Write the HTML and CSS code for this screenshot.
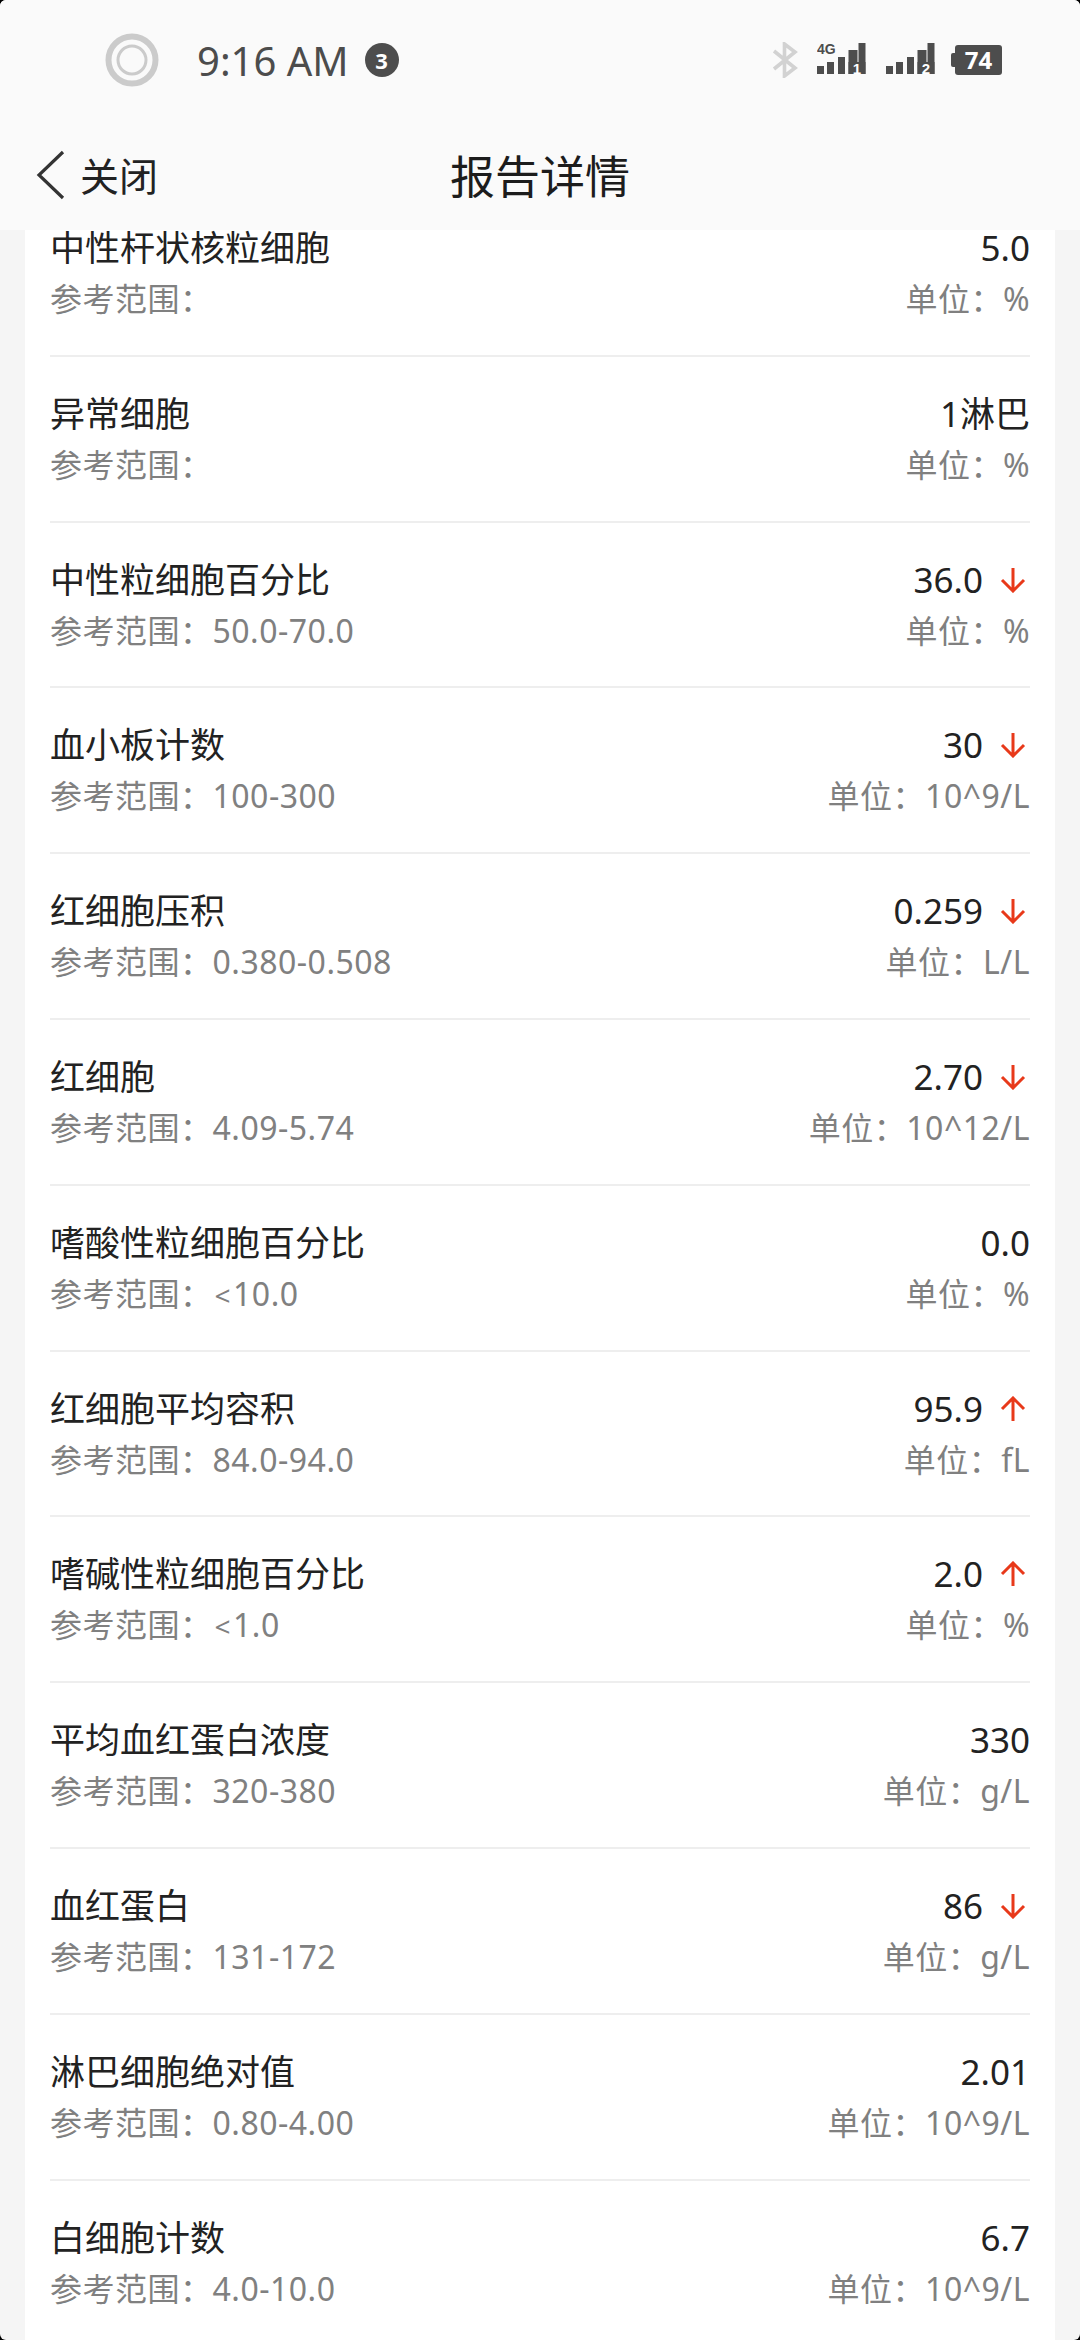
FILE: index.html
```html
<!DOCTYPE html>
<html lang="zh-CN">
<head>
    <meta charset="UTF-8">
    <meta name="viewport" content="width=device-width, initial-scale=1.0">
    <title>报告详情</title>
    <link rel="stylesheet" href="styles.css">
</head>
<body>
    <div class="app">
        <header class="top">
            <!-- Status bar -->
            <div class="status">
                <div class="status-left">
                    <svg class="ring" width="54" height="54" viewBox="0 0 54 54">
                        <circle cx="27" cy="27" r="23.5" fill="none" stroke="#cbcbcb" stroke-width="6"/>
                        <circle cx="27" cy="27" r="14" fill="none" stroke="#cbcbcb" stroke-width="3"/>
                    </svg>
                    <span class="clock">9:16 AM</span>
                    <span class="badge">3</span>
                </div>
                <div class="status-right">
                    <svg class="bt" width="26" height="36" viewBox="0 0 26 36">
                        <path d="M2 9 L23 26 L12.5 34 V2 L23 10 L2 27" fill="none" stroke="#d2d2d2" stroke-width="3.6"/>
                    </svg>
                    <svg class="sig" width="50" height="34" viewBox="0 0 50 34">
                        <text x="0" y="10.5" class="sig-net">4G</text>
                        <rect x="0" y="23" width="7" height="8"/>
                        <rect x="10" y="19" width="7" height="12"/>
                        <rect x="21" y="14" width="7" height="17"/>
                        <rect x="31.5" y="7" width="9" height="24"/>
                        <rect x="41.5" y="0" width="7" height="31"/>
                        <rect x="31.5" y="19" width="17" height="12"/>
                        <text x="40" y="30.5" class="sig-num">1</text>
                    </svg>
                    <svg class="sig" width="50" height="34" viewBox="0 0 50 34">
                        <rect x="0" y="23" width="7" height="8"/>
                        <rect x="10" y="19" width="7" height="12"/>
                        <rect x="21" y="14" width="7" height="17"/>
                        <rect x="31.5" y="7" width="9" height="24"/>
                        <rect x="41.5" y="0" width="7" height="31"/>
                        <rect x="31.5" y="19" width="17" height="12"/>
                        <text x="40" y="30.5" class="sig-num">2</text>
                    </svg>
                    <div class="battery"><span>74</span></div>
                </div>
            </div>
            <!-- Title bar -->
            <nav class="nav">
                <a class="back">
                    <svg width="30" height="50" viewBox="0 0 30 50">
                        <path d="M27 2 L3 25 L27 48" fill="none" stroke="#333" stroke-width="3.2"/>
                    </svg>
                    <span>关闭</span>
                </a>
                <h1>报告详情</h1>
            </nav>
        </header>

        <main class="scroller">
            <div class="card">
                <div class="row">
                    <div class="line"><span class="name">中性杆状核粒细胞</span><span class="value">5.0</span></div>
                    <div class="line sub"><span>参考范围：</span><span>单位：%</span></div>
                </div>
                <div class="row">
                    <div class="line"><span class="name">异常细胞</span><span class="value">1淋巴</span></div>
                    <div class="line sub"><span>参考范围：</span><span>单位：%</span></div>
                </div>
                <div class="row">
                    <div class="line"><span class="name">中性粒细胞百分比</span><span class="value">36.0<svg class="arrow" viewBox="0 0 26 26"><path d="M13 1 V24 M2 13 L13 24 L24 13"/></svg></span></div>
                    <div class="line sub"><span>参考范围：50.0-70.0</span><span>单位：%</span></div>
                </div>
                <div class="row">
                    <div class="line"><span class="name">血小板计数</span><span class="value">30<svg class="arrow" viewBox="0 0 26 26"><path d="M13 1 V24 M2 13 L13 24 L24 13"/></svg></span></div>
                    <div class="line sub"><span>参考范围：100-300</span><span>单位：10^9/L</span></div>
                </div>
                <div class="row">
                    <div class="line"><span class="name">红细胞压积</span><span class="value">0.259<svg class="arrow" viewBox="0 0 26 26"><path d="M13 1 V24 M2 13 L13 24 L24 13"/></svg></span></div>
                    <div class="line sub"><span>参考范围：0.380-0.508</span><span>单位：L/L</span></div>
                </div>
                <div class="row">
                    <div class="line"><span class="name">红细胞</span><span class="value">2.70<svg class="arrow" viewBox="0 0 26 26"><path d="M13 1 V24 M2 13 L13 24 L24 13"/></svg></span></div>
                    <div class="line sub"><span>参考范围：4.09-5.74</span><span>单位：10^12/L</span></div>
                </div>
                <div class="row">
                    <div class="line"><span class="name">嗜酸性粒细胞百分比</span><span class="value">0.0</span></div>
                    <div class="line sub"><span>参考范围：<span class="lt">&lt;</span>10.0</span><span>单位：%</span></div>
                </div>
                <div class="row">
                    <div class="line"><span class="name">红细胞平均容积</span><span class="value">95.9<svg class="arrow" viewBox="0 0 26 26"><path d="M13 25 V2 M2 13 L13 2 L24 13"/></svg></span></div>
                    <div class="line sub"><span>参考范围：84.0-94.0</span><span>单位：fL</span></div>
                </div>
                <div class="row">
                    <div class="line"><span class="name">嗜碱性粒细胞百分比</span><span class="value">2.0<svg class="arrow" viewBox="0 0 26 26"><path d="M13 25 V2 M2 13 L13 2 L24 13"/></svg></span></div>
                    <div class="line sub"><span>参考范围：<span class="lt">&lt;</span>1.0</span><span>单位：%</span></div>
                </div>
                <div class="row">
                    <div class="line"><span class="name">平均血红蛋白浓度</span><span class="value">330</span></div>
                    <div class="line sub"><span>参考范围：320-380</span><span>单位：g/L</span></div>
                </div>
                <div class="row">
                    <div class="line"><span class="name">血红蛋白</span><span class="value">86<svg class="arrow" viewBox="0 0 26 26"><path d="M13 1 V24 M2 13 L13 24 L24 13"/></svg></span></div>
                    <div class="line sub"><span>参考范围：131-172</span><span>单位：g/L</span></div>
                </div>
                <div class="row">
                    <div class="line"><span class="name">淋巴细胞绝对值</span><span class="value">2.01</span></div>
                    <div class="line sub"><span>参考范围：0.80-4.00</span><span>单位：10^9/L</span></div>
                </div>
                <div class="row">
                    <div class="line"><span class="name">白细胞计数</span><span class="value">6.7</span></div>
                    <div class="line sub"><span>参考范围：4.0-10.0</span><span>单位：10^9/L</span></div>
                </div>
            </div>
        </main>
    </div>
</body>
</html>
```

FILE: styles.css
```css
* {
    margin: 0;
    padding: 0;
    box-sizing: border-box;
}
body {
    background: #000;
    font-family: "Noto Sans", "Noto Sans CJK SC", sans-serif;
    color: #222;
}
.app {
    width: 1080px;
    height: 2340px;
    display: flex;
    flex-direction: column;
    overflow: hidden;
    border-radius: 6px;
    background: #f5f5f5;
}

/* Status bar and title bar */
.top {
    height: 230px;
    flex: none;
    background: #fafafa;
}
.status {
    height: 120px;
    display: flex;
    align-items: center;
    justify-content: space-between;
    padding: 0 78px 0 105px;
}
.status-left {
    display: flex;
    align-items: center;
}
.clock {
    margin-left: 38px;
    font-size: 40px;
    color: #4c4c4c;
}
.badge {
    width: 34px;
    height: 34px;
    margin-left: 16px;
    border-radius: 50%;
    background: #4d4d4d;
    color: #fff;
    font-size: 22px;
    font-weight: 700;
    line-height: 34px;
    text-align: center;
}
.status-right {
    display: flex;
    align-items: center;
    gap: 19px;
}
.sig rect {
    fill: #4d4d4d;
}
.sig-net {
    font-family: "Liberation Sans", sans-serif;
    font-size: 14px;
    font-weight: 700;
    fill: #4d4d4d;
}
.sig-num {
    font-family: "Liberation Sans", sans-serif;
    font-size: 15px;
    font-weight: 700;
    fill: #fff;
    text-anchor: middle;
}
.battery {
    position: relative;
    width: 47px;
    height: 30px;
    border-radius: 3px;
    background: #4d4d4d;
    color: #fff;
    font-size: 24px;
    font-weight: 700;
    line-height: 30px;
    text-align: center;
}
/* battery nub */
.battery::before {
    content: "";
    position: absolute;
    left: -4px;
    top: 8px;
    width: 4px;
    height: 14px;
    border-radius: 2px 0 0 2px;
    background: #4d4d4d;
}
.nav {
    height: 110px;
    display: grid;
    grid-template-columns: 1fr auto 1fr;
    align-items: center;
    padding: 0 36px;
}
.back {
    display: flex;
    align-items: center;
    gap: 14px;
    font-size: 39px;
    color: #222;
}
.back span,
.nav h1 {
    margin-bottom: 2px;
}
.nav h1 {
    font-size: 45px;
    font-weight: 400;
    color: #1c1c1c;
}

/* Result list, scrolled so the first row sits under the title bar */
.scroller {
    flex: 1;
    overflow: hidden;
    padding: 0 25px;
}
.card {
    margin-top: -39px;
    background: #fff;
    padding: 0 25px;
}
.row {
    height: 165.8px;
    padding-top: 32px;
    border-bottom: 2px solid #eeeeee;
}
.line {
    display: flex;
    justify-content: space-between;
    align-items: center;
    height: 50px;
}
.name {
    font-size: 35px;
    line-height: 50px;
    color: #222;
}
.value {
    display: flex;
    align-items: center;
    font-size: 35px;
    line-height: 50px;
    color: #222;
}
.arrow {
    width: 26px;
    height: 26px;
    margin: 0 4px 0 17px;
    fill: none;
    stroke: #e8391a;
    stroke-width: 3;
}
.sub {
    margin-top: -1px;
    font-size: 32px;
    letter-spacing: 0.5px;
    color: #808080;
}
/* the less-than sign sits small next to the digits */
.lt {
    margin: 0 2px;
    font-size: 28px;
}
```
